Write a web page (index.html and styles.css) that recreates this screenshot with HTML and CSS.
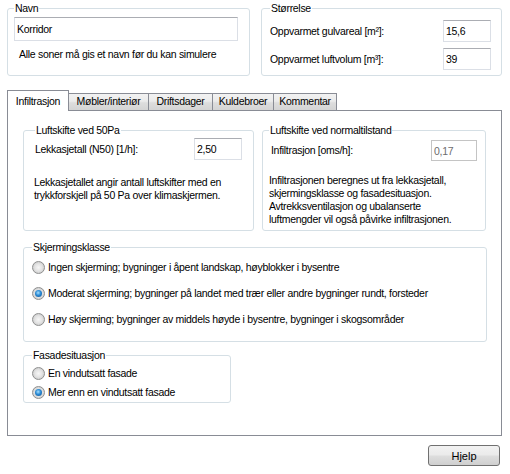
FILE: index.html
```html
<!DOCTYPE html>
<html lang="no">
<head>
  <meta charset="UTF-8" />
  <title>Sone</title>
  <link rel="stylesheet" href="styles.css">
</head>
<body>
  <div class="form">
    <!-- Navn og størrelse -->
    <div class="top-row">
      <fieldset class="group group-name">
        <legend>Navn</legend>
        <input type="text" class="text-field name-field" value="Korridor" />
        <p class="hint">Alle soner må gis et navn før du kan simulere</p>
      </fieldset>

      <fieldset class="group group-size">
        <legend>Størrelse</legend>
        <div class="field-row">
          <label>Oppvarmet gulvareal [m²]:</label>
          <input type="text" class="text-field num-field" value="15,6" />
        </div>
        <div class="field-row">
          <label>Oppvarmet luftvolum [m³]:</label>
          <input type="text" class="text-field num-field" value="39" />
        </div>
      </fieldset>
    </div>

    <!-- Faner -->
    <div class="tabs">
      <div class="tab active">Infiltrasjon</div>
      <div class="tab tab-mobler">Møbler/interiør</div>
      <div class="tab tab-drift">Driftsdager</div>
      <div class="tab tab-kulde">Kuldebroer</div>
      <div class="tab tab-komm">Kommentar</div>
    </div>

    <div class="tab-panel">
      <div class="air-row">
        <fieldset class="group group-50pa">
          <legend>Luftskifte ved 50Pa</legend>
          <div class="field-row">
            <label>Lekkasjetall (N50) [1/h]:</label>
            <input type="text" class="text-field num-field" value="2,50" />
          </div>
          <p class="desc">Lekkasjetallet angir antall luftskifter med en trykkforskjell på 50 Pa over klimaskjermen.</p>
        </fieldset>

        <fieldset class="group group-normal">
          <legend>Luftskifte ved normaltilstand</legend>
          <div class="field-row">
            <label>Infiltrasjon [oms/h]:</label>
            <input type="text" class="text-field num-field small" value="0,17" disabled />
          </div>
          <p class="desc">Infiltrasjonen beregnes ut fra lekkasjetall, skjermingsklasse og fasadesituasjon. Avtrekksventilasjon og ubalanserte luftmengder vil også påvirke infiltrasjonen.</p>
        </fieldset>
      </div>

      <fieldset class="group group-shield">
        <legend>Skjermingsklasse</legend>
        <div class="radio-row"><span class="radio"></span>Ingen skjerming; bygninger i åpent landskap, høyblokker i bysentre</div>
        <div class="radio-row"><span class="radio on"></span>Moderat skjerming; bygninger på landet med trær eller andre bygninger rundt, forsteder</div>
        <div class="radio-row"><span class="radio"></span>Høy skjerming; bygninger av middels høyde i bysentre, bygninger i skogsområder</div>
      </fieldset>

      <fieldset class="group group-facade">
        <legend>Fasadesituasjon</legend>
        <div class="radio-row"><span class="radio"></span>En vindutsatt fasade</div>
        <div class="radio-row"><span class="radio on"></span>Mer enn en vindutsatt fasade</div>
      </fieldset>
    </div>

    <div class="footer">
      <button class="btn">Hjelp</button>
    </div>
  </div>
</body>
</html>
```

FILE: styles.css
```css
* {
  box-sizing: border-box;
  margin: 0;
  padding: 0;
}

body {
  background-color: #ffffff;
  font-family: 'Liberation Sans', Arial, sans-serif;
  font-size: 10.5px;
  letter-spacing: -0.3px;
  line-height: 13px;
  color: #000000;
}

.form {
  width: 510px;
  padding: 2px 8px 0 7px;
}

/* Group boxes */
.group {
  border: 1px solid #d5dfe5;
  border-radius: 3px;
  padding: 0 8px;
}

.group legend {
  padding: 0 1px;
  margin-left: 0;
  line-height: 13px;
}

/* Text boxes */
.text-field {
  font-family: 'Liberation Sans', Arial, sans-serif;
  font-size: 10.5px;
  letter-spacing: -0.3px;
  color: #000000;
  background: #ffffff;
  border: 1px solid #dbdfe6;
  border-top-color: #abadb3;
  padding: 2px 2px;
  outline: none;
  display: block;
}

.text-field:disabled {
  border-color: #c4c4c4;
  color: #6d6d6d;
}

.field-row {
  display: flex;
  align-items: center;
  justify-content: space-between;
}

.num-field {
  width: 48px;
  height: 22px;
}

/* Top row */
.top-row {
  display: flex;
  gap: 11px;
}

.group-name {
  width: 242px;
  height: 74px;
  padding: 0 11px 0 6px;
}

.name-field {
  width: 224px;
  height: 24px;
  margin-top: 2px;
}

.hint {
  margin: 7px 0 0 5px;
}

.group-size {
  width: 243px;
  height: 74px;
  padding: 5px 10px 0 8px;
}

.group-size .field-row + .field-row {
  margin-top: 6px;
}

/* Tabs */
.tabs {
  display: flex;
  align-items: flex-end;
  height: 20px;
  margin-top: 14px;
}

.tab {
  height: 17px;
  padding: 1px 3px 0;
  text-align: center;
  border: 1px solid #898c95;
  border-bottom: none;
  border-left: none;
  background: linear-gradient(#f2f2f2, #ebebeb 45%, #dddddd 55%, #d4d4d4);
}

.tab.active {
  height: 21px;
  margin-bottom: -1px;
  padding-top: 4px;
  border-left: 1px solid #898c95;
  background: #ffffff;
  position: relative;
  z-index: 1;
  width: 62px;
}

.tab-mobler { width: 80px; }
.tab-drift { width: 64px; }
.tab-kulde { width: 61px; }
.tab-komm { width: 63px; }

.tab-panel {
  height: 326px;
  border: 1px solid #898c95;
  padding: 13px 15px 0;
}

.air-row {
  display: flex;
  gap: 8px;
}

.group-50pa {
  width: 231px;
  height: 107px;
  padding: 0 11px 0 11px;
}

.group-50pa .field-row {
  margin-top: 1px;
}

.group-normal {
  width: 224px;
  height: 107px;
  padding: 0 8px 0 6px;
}

.group-normal .field-row {
  margin-top: 3px;
  padding-left: 2px;
}

.small {
  width: 46px;
  height: 21px;
}

.group-50pa .desc {
  margin-top: 16px;
  margin-left: -1px;
}

.group-normal .desc {
  margin-top: 13px;
  max-width: 198px;
}

/* Radio groups */
.group-shield {
  width: 464px;
  height: 101px;
  margin-top: 10px;
  padding-top: 0;
}

.group-shield .radio-row {
  height: 26px;
}

.group-facade {
  width: 208px;
  height: 54px;
  margin-top: 7px;
  padding-top: 2px;
}

.group-facade .radio-row {
  height: 19px;
}

.radio-row {
  display: flex;
  align-items: center;
  gap: 3px;
}

.radio {
  width: 13px;
  height: 13px;
  border-radius: 50%;
  border: 1px solid #8e8f8f;
  background: radial-gradient(circle at 50% 50%, #f6f6f6 0, #e4e4e4 45%, #cfcfcf 75%, #f0f0f0 100%);
  display: flex;
  align-items: center;
  justify-content: center;
  flex-shrink: 0;
}

.radio.on::after {
  content: '';
  width: 7px;
  height: 7px;
  border-radius: 50%;
  background: radial-gradient(circle at 45% 40%, #a6e0ff 0, #2a8ad4 45%, #0e4f8f 100%);
}

/* Footer */
.footer {
  display: flex;
  justify-content: flex-end;
  padding: 9px 2px 0 0;
}

.btn {
  width: 72px;
  height: 21px;
  font-family: 'Liberation Sans', Arial, sans-serif;
  font-size: 11px;
  color: #000000;
  border: 1px solid #707070;
  border-radius: 3px;
  background: linear-gradient(#f2f2f2, #ebebeb 45%, #dddddd 55%, #cfcfcf);
}
```
